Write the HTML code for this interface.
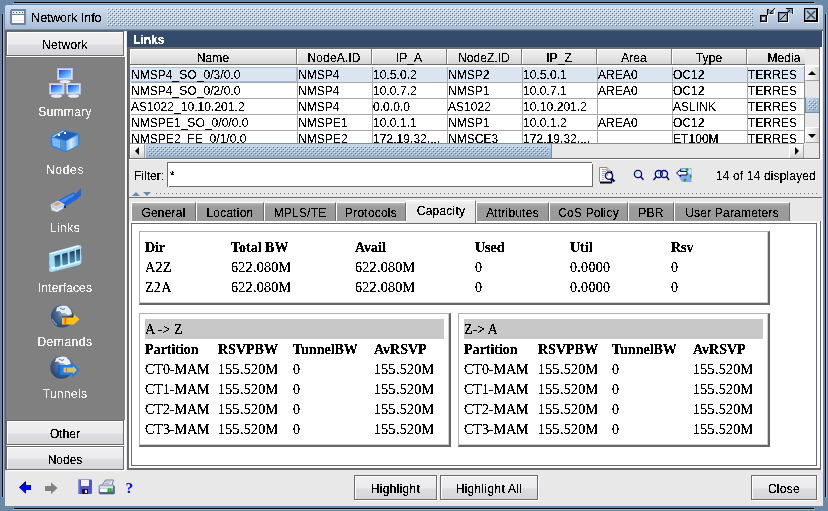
<!DOCTYPE html>
<html><head><meta charset="utf-8"><style>
*{margin:0;padding:0;box-sizing:border-box}
html,body{width:828px;height:511px;overflow:hidden;background:#6a88a8}
body{position:relative;font-family:"Liberation Sans",sans-serif;font-size:12px;color:#000}
.a{position:absolute}
.t{position:absolute;white-space:nowrap;line-height:1}
.btn{position:absolute;border:1px solid #6a6a6a;background:linear-gradient(#efeff1,#ebebed 50%,#dddde1 58%,#d6d6da);box-shadow:inset 1px 1px 0 #fff,1px 1px 0 #fff}
.hdr{position:absolute;top:0;height:16px;border-right:1px solid #7c7c7c;border-bottom:1px solid #6c6c6c;background:linear-gradient(#f0f0f0,#e6e6e6 50%,#d4d4d4);box-shadow:inset 1px 1px 0 #fff;text-align:center;line-height:19px;letter-spacing:0.1px}
.cell{position:absolute;height:16px;border-right:1px solid #a8a8a8;border-bottom:1px solid #a8a8a8;padding-left:0px;padding-top:2px;line-height:12px;overflow:hidden;white-space:nowrap;letter-spacing:0.05px}
.tab{position:absolute;top:202px;height:19px;background:linear-gradient(#b4b4b4,#9c9c9c 4px,#999);border-left:1px solid #fff;border-top:1px solid #fff;border-right:1px solid #6a6a6a;text-align:center;line-height:20px;font-size:12px;letter-spacing:0.2px}
.sel{background:linear-gradient(#f4f4f4,#e8e8e8 4px);line-height:20px;height:21px;border-right-color:#7a7a7a}
.ser{font-family:"Liberation Serif",serif;font-size:14px}
.bx{position:absolute;border-top:1px solid #b0b0b0;border-left:1px solid #b0b0b0;border-right:2px solid #666;border-bottom:2px solid #666;background:#fff;box-shadow:inset -1px -1px 0 #d0d0d0}
.lbl{position:absolute;color:#f0f0f0;font-size:12px;white-space:nowrap;line-height:1;width:120px;text-align:center;left:5px}
.t,.cell,.tx,.lbl{filter:url(#cs)}.tx{display:inline-block}.ser{filter:url(#cf)}</style></head><body>
<svg width="0" height="0" style="position:absolute"><filter id="cs" x="0" y="0" width="100%" height="100%"><feComponentTransfer><feFuncA type="discrete" tableValues="0 0 1 1 1"/></feComponentTransfer></filter><filter id="cf" x="0" y="0" width="100%" height="100%"><feComponentTransfer><feFuncA type="discrete" tableValues="0 0 0 0 0 0 0 1 1 1 1 1 1 1 1 1 1 1 1 1"/></feComponentTransfer></filter></svg><div class="a" style="left:14px;top:2px;width:800px;height:1px;background:#000"></div>
<div class="a" style="left:2px;top:14px;width:1px;height:483px;background:#000"></div>
<div class="a" style="left:825px;top:14px;width:1px;height:483px;background:#000"></div>
<div class="a" style="left:14px;top:508px;width:800px;height:1px;background:#000"></div>
<div class="a" style="left:13px;top:3px;width:802px;height:1px;background:#9cb6d4"></div>
<div class="a" style="left:3px;top:13px;width:1px;height:485px;background:#9cb6d4"></div>
<div class="a" style="left:826px;top:13px;width:1px;height:485px;background:#9cb6d4"></div>
<div class="a" style="left:13px;top:509px;width:802px;height:1px;background:#9cb6d4"></div>
<div class="a" style="left:5px;top:5px;width:818px;height:24px;background:linear-gradient(#d0dded,#b9cbe0 60%,#a9bdd5);border-radius:2px 2px 0 0"></div>
<div class="a" style="left:5px;top:29px;width:818px;height:1px;background:#7890aa"></div>
<div class="a" style="left:5px;top:30px;width:818px;height:1px;background:#5e6670"></div>
<svg class="a" style="left:107px;top:8px" width="646" height="18"><defs><pattern id="bp" width="4" height="4" patternUnits="userSpaceOnUse"><rect x="0" y="0" width="1" height="1" fill="#fff"/><rect x="2" y="2" width="1" height="1" fill="#fff"/><rect x="1" y="1" width="1" height="1" fill="#5d7594"/><rect x="3" y="3" width="1" height="1" fill="#5d7594"/></pattern></defs><rect width="646" height="18" fill="url(#bp)"/></svg>
<svg class="a" style="left:10px;top:9px" width="17" height="17" shape-rendering="crispEdges"><path d="M1 0 H15 L16 1 V15 L15 16 H1 L0 15 V1 Z" fill="#6d85a3"/><rect x="2" y="2" width="12" height="3" fill="#e4ecf4"/><rect x="3" y="3" width="1" height="1" fill="#44546a"/><rect x="6" y="3" width="1" height="1" fill="#44546a"/><rect x="9" y="3" width="1" height="1" fill="#44546a"/><rect x="12" y="3" width="1" height="1" fill="#44546a"/><rect x="2" y="6" width="12" height="8" fill="#fff"/><rect x="2" y="11" width="12" height="1" fill="#f4e8f0"/></svg>
<div class="t" style="left:31px;top:11px;font-size:13px;letter-spacing:-0.2px">Network Info</div>
<svg class="a" style="left:756px;top:6px" width="66" height="18" shape-rendering="crispEdges"><g transform="translate(-756,-6)">
<rect x="760" y="15" width="7" height="7" fill="#000"/><rect x="761" y="16" width="5" height="5" fill="#44566c"/><rect x="762" y="17" width="3" height="3" fill="#cfdcea"/>
<rect x="767" y="16" width="1" height="7" fill="#fff"/><rect x="761" y="22" width="7" height="1" fill="#fff"/>
<rect x="767" y="9" width="1" height="6" fill="#000"/><rect x="767" y="9" width="2" height="1" fill="#000"/>
<rect x="768" y="10" width="6" height="4" fill="#7f96b0"/>
<rect x="774" y="8" width="1" height="1" fill="#000"/><rect x="773" y="9" width="1" height="1" fill="#000"/><rect x="772" y="10" width="1" height="1" fill="#000"/><rect x="771" y="11" width="1" height="1" fill="#000"/><rect x="770" y="12" width="1" height="1" fill="#000"/>
<rect x="770" y="13" width="3" height="1" fill="#000"/><rect x="768" y="14" width="7" height="1" fill="#fff"/><rect x="774" y="10" width="1" height="4" fill="#fff"/>
<rect x="778" y="12" width="10" height="10" fill="#000"/><rect x="779" y="13" width="8" height="8" fill="#6a819c"/><rect x="780" y="14" width="6" height="6" fill="#a9bdd3"/>
<rect x="780" y="19" width="1" height="1" fill="#000"/><rect x="781" y="18" width="1" height="1" fill="#000"/><rect x="782" y="17" width="1" height="1" fill="#000"/><rect x="783" y="16" width="1" height="1" fill="#000"/><rect x="784" y="15" width="1" height="1" fill="#000"/><rect x="785" y="14" width="1" height="1" fill="#000"/>
<rect x="788" y="13" width="1" height="10" fill="#fff"/><rect x="779" y="22" width="10" height="1" fill="#fff"/>
<rect x="786" y="8" width="7" height="1" fill="#000"/><rect x="792" y="8" width="1" height="6" fill="#1a1a1a"/><rect x="787" y="9" width="5" height="4" fill="#7f96b0"/>
<rect x="789" y="10" width="1" height="1" fill="#000"/><rect x="788" y="11" width="1" height="1" fill="#000"/><rect x="787" y="12" width="1" height="1" fill="#000"/>
<rect x="793" y="9" width="1" height="5" fill="#fff"/>
<rect x="804" y="8" width="14" height="14" fill="#000"/><rect x="805" y="9" width="11" height="11" fill="#8ea4bd"/><rect x="806" y="10" width="10" height="10" fill="#b4c6da"/>
<rect x="816" y="10" width="1" height="11" fill="#000"/><rect x="806" y="20" width="11" height="1" fill="#000"/>
<rect x="818" y="9" width="1" height="14" fill="#fff"/><rect x="805" y="22" width="14" height="1" fill="#fff"/>
<path d="M807 11 L815 19 M815 11 L807 19" stroke="#3c4a5a" stroke-width="1.6" shape-rendering="auto"/>
</g></svg>
<div class="a" style="left:5px;top:31px;width:818px;height:475px;background:#e8e8e8"></div>
<div class="a" style="left:5px;top:31px;width:1px;height:439px;background:#606060"></div>
<div class="a" style="left:6px;top:56px;width:119px;height:364px;background:#808080"></div>
<div class="a" style="left:6px;top:56px;width:119px;height:1px;background:#f4f4f4"></div>
<div class="a" style="left:6px;top:57px;width:119px;height:1px;background:#747474"></div>
<div class="a" style="left:6px;top:31px;width:118px;height:25px;background:#e8e8e8"></div>
<div class="btn" style="left:6px;top:31px;width:118px;height:25px"></div>
<div class="t" style="left:5px;top:39px;width:120px;text-align:center;letter-spacing:0.25px">Network</div>
<div class="btn" style="left:6px;top:420px;width:118px;height:25px"></div>
<div class="t" style="left:5px;top:428px;width:120px;text-align:center">Other</div>
<div class="btn" style="left:6px;top:446px;width:118px;height:24px"></div>
<div class="t" style="left:5px;top:454px;width:120px;text-align:center">Nodes</div>
<div class="a" style="left:125px;top:31px;width:1px;height:439px;background:#fff"></div>
<div class="a" style="left:126px;top:31px;width:1px;height:439px;background:#ececec"></div>
<div class="a" style="left:127px;top:47px;width:1px;height:423px;background:#606060"></div>
<div class="lbl" style="top:106px;letter-spacing:0.33px">Summary</div>
<div class="lbl" style="top:164px;letter-spacing:0.7px">Nodes</div>
<div class="lbl" style="top:222px;letter-spacing:0.5px">Links</div>
<div class="lbl" style="top:282px;letter-spacing:0.15px">Interfaces</div>
<div class="lbl" style="top:336px;letter-spacing:0.55px">Demands</div>
<div class="lbl" style="top:388px;letter-spacing:0.33px">Tunnels</div>
<svg class="a" style="left:46px;top:64px" width="38" height="36">
<defs>
<linearGradient id="scr" x1="0" y1="0" x2="1" y2="1"><stop offset="0" stop-color="#1a3ee8"/><stop offset=".55" stop-color="#58a8f8"/><stop offset="1" stop-color="#a8e8ff"/></linearGradient>
</defs>
<g>
<rect x="11.5" y="4.5" width="15" height="11" fill="#d8dcf4" stroke="#b8c0e8"/>
<rect x="13" y="6" width="12" height="8" fill="url(#scr)"/>
<ellipse cx="19" cy="17.5" rx="5.5" ry="1.6" fill="#e8ecf8"/>
<rect x="3.5" y="19.5" width="14.5" height="10.5" fill="#d8dcf4" stroke="#b8c0e8"/>
<rect x="5" y="21" width="11.5" height="7.5" fill="url(#scr)"/>
<ellipse cx="10.5" cy="32" rx="5.5" ry="1.8" fill="#e8ecf8"/>
<rect x="20.5" y="19.5" width="14" height="10.5" fill="#d8dcf4" stroke="#b8c0e8"/>
<rect x="22" y="21" width="11" height="7.5" fill="url(#scr)"/>
<ellipse cx="27.5" cy="32" rx="5.5" ry="1.8" fill="#e8ecf8"/>
</g>
</svg>
<svg class="a" style="left:46px;top:124px" width="38" height="34">
<defs><linearGradient id="nf" x1="0" y1="0" x2="1" y2="0"><stop offset="0" stop-color="#70b0f0"/><stop offset=".4" stop-color="#d8ecff"/><stop offset="1" stop-color="#5aa0e8"/></linearGradient></defs>
<path d="M5 12 L17 5.5 L32 9 L33.5 11 L33.5 21 L20 28.5 L6 23 L4.5 20 Z" fill="#2f80e2"/>
<path d="M6 12.5 L17 6.5 L31 10 L20 16.5 Z" fill="#1f5eb4"/>
<path d="M6 12.5 L17 6.5 L18.5 7 L8 13 Z" fill="#a8d4fa"/>
<rect x="12" y="10" width="2" height="2" fill="#fff"/><rect x="18" y="8" width="2" height="2" fill="#fff"/>
<path d="M20 17 L32 11 L32.5 21 L20.5 27 Z" fill="url(#nf)"/>
<path d="M6 13.5 L19 17.5 L19.5 26.5 L6.5 21.5 Z" fill="#78b8f4"/>
<path d="M14 16 L19 17.5 L19.5 26.5 L14 24.5 Z" fill="#4a80b8" opacity=".7"/>
</svg>
<svg class="a" style="left:46px;top:184px" width="38" height="32">
<path d="M11.5 17 L27 8.5 L30 9.5 L35 4 L35 11.5 L30 16 L20 22 L17 25 Z" fill="#1f66da"/>
<path d="M13 17.5 L27 10 L29 11 L18 18 Z" fill="#4a90f0"/>
<path d="M4.5 20.5 L12 16.5 L18.5 20 L17.5 24.5 L11 28 L5.5 26.5 Z" fill="#c8d2e4"/>
<path d="M7 20.5 L12 18 L15 19.5 L10 22 Z" fill="#d8a070"/>
<path d="M6 24 L11 27 L16 24" fill="none" stroke="#eef2fa" stroke-width="1.2"/>
<rect x="18" y="22" width="2" height="2" fill="#203050"/>
</svg>
<svg class="a" style="left:44px;top:240px" width="42" height="36">
<defs><linearGradient id="sl" x1="0" y1="0" x2="0" y2="1"><stop offset="0" stop-color="#1c3a50"/><stop offset="1" stop-color="#5a9ac0"/></linearGradient></defs>
<path d="M5 13 L34 5 Q37.5 4.5 37.5 7.5 L37 9 L37 14 L37.5 15.5 L37.5 22 Q37.5 24 35 25 L8 32 Q5 32.5 5 30 L5.5 27 L5 22 L5.5 20 Z" fill="#9fdcf6"/>
<path d="M5.5 13.5 L34 5.5 L35.5 6.5 L7 14.5 Z" fill="#eefaff"/>
<path d="M7 27 L36 19.5 L36 22.5 L8 30 Z" fill="#d8f4ff"/>
<path d="M10.5 16 L16 14.5 L16.5 26 L11 27.5 Z" fill="url(#sl)"/>
<path d="M18 14 L23.5 12.5 L24 24 L18.5 25.5 Z" fill="url(#sl)"/>
<path d="M25.5 12 L30.5 10.5 L31 22 L26 23.5 Z" fill="url(#sl)"/>
<path d="M32 10 L36 9 L36 20.5 L32.5 21.5 Z" fill="url(#sl)"/>
</svg>
<svg class="a" style="left:46px;top:300px" width="38" height="34">
<defs><radialGradient id="gl" cx=".6" cy=".35" r=".8"><stop offset="0" stop-color="#a8bcd4"/><stop offset=".4" stop-color="#4e6e96"/><stop offset=".85" stop-color="#24446c"/><stop offset="1" stop-color="#1a3050"/></radialGradient></defs>
<circle cx="16.3" cy="16.2" r="11.3" fill="url(#gl)"/>
<path d="M11 7.5 Q16 4.5 21 6 L24.5 9.5 L26 14 L22 15.5 L19 13 L16 13.5 L13.5 11 L10 11.5 Z" fill="#e4ecf4"/>
<path d="M14 8 L17 9.5 L19 8.5" stroke="#5a7090" stroke-width="1" fill="none"/>
<path d="M6 19 Q8 23 11 25" stroke="#7a98bc" stroke-width="1.5" fill="none"/>
<path d="M16 17 L27 17 L27 13.5 L33.5 19.2 L27 25 L27 24.5 L16 24.5 Z" fill="#ffc21c"/>
<path d="M16 17 L27 17 L27 13.5" stroke="#1a2030" stroke-width="1" fill="none"/>
<rect x="18.5" y="17.5" width="1.8" height="7" fill="#ff6400"/>
</svg>
<svg class="a" style="left:46px;top:352px" width="38" height="34">
<circle cx="15.6" cy="15.5" r="11.3" fill="url(#gl)"/>
<path d="M10 6.5 Q15 3.5 20 5 L23.5 8.5 L25 12 L20 13 L17 11 L14 11.5 L12.5 9.5 L9 10 Z" fill="#eef2f8"/>
<path d="M13 7 L16 8.5 L18 7.5" stroke="#5a7090" stroke-width="1" fill="none"/>
<path d="M13 13 L26 13 L26 10 L33.5 18 L26 25.5 L26 23 L13 23 Z" fill="#1a7eee"/>
<path d="M17.5 15.5 L27 15.5 L27 14 L31 18 L27 22 L27 20.5 L17.5 20.5 Z" fill="#d4c466"/>
<rect x="20" y="15.5" width="1" height="5" fill="#e07030"/>
<path d="M13 23 L13 13" stroke="#0a4ab0" stroke-width="1"/>
</svg>

<div class="a" style="left:127px;top:31px;width:695px;height:16px;background:#354b6b"></div>
<div class="t" style="left:133px;top:34px;color:#fff;font-weight:bold;font-size:12px">Links</div>
<div class="a" style="left:128px;top:47px;width:692px;height:112px;background:#6c6c6c"></div>
<div class="a" style="left:820px;top:47px;width:2px;height:113px;background:#fff"></div>
<div class="a" style="left:128px;top:159px;width:694px;height:1px;background:#fff"></div>
<div class="a" style="left:130px;top:49px;width:689px;height:109px;background:#fff"></div>
<div class="a" style="left:130px;top:49px;width:675px;height:16px;overflow:hidden">
<div class="hdr" style="left:0px;width:167px"><span class="tx">Name</span></div>
<div class="hdr" style="left:167px;width:75px"><span class="tx">NodeA.ID</span></div>
<div class="hdr" style="left:242px;width:75px"><span class="tx">IP_A</span></div>
<div class="hdr" style="left:317px;width:75px"><span class="tx">NodeZ.ID</span></div>
<div class="hdr" style="left:392px;width:75px"><span class="tx">IP_Z</span></div>
<div class="hdr" style="left:467px;width:75px"><span class="tx">Area</span></div>
<div class="hdr" style="left:542px;width:75px"><span class="tx">Type</span></div>
<div class="hdr" style="left:617px;width:75px"><span class="tx">Media</span></div>
</div>
<div class="a" style="left:805px;top:49px;width:14px;height:16px;background:#e8e8e8"></div>
<div class="a" style="left:130px;top:65px;width:675px;height:1px;background:#fff"></div>
<div class="a" style="left:130px;top:67px;width:674px;height:15px;background:#dae5f1"></div>
<div class="a" style="left:131px;top:67px;width:673px;height:77px;overflow:hidden">
<div class="a" style="left:-1px;top:0;width:167px;height:15px;border:1px solid #a9c0da"></div>
<div class="cell" style="left:0px;top:0px;width:167px">NMSP4_SO_0/3/0.0</div>
<div class="cell" style="left:167px;top:0px;width:75px">NMSP4</div>
<div class="cell" style="left:242px;top:0px;width:75px">10.5.0.2</div>
<div class="cell" style="left:317px;top:0px;width:75px">NMSP2</div>
<div class="cell" style="left:392px;top:0px;width:75px">10.5.0.1</div>
<div class="cell" style="left:467px;top:0px;width:75px">AREA0</div>
<div class="cell" style="left:542px;top:0px;width:75px">OC12</div>
<div class="cell" style="left:617px;top:0px;width:75px">TERRES</div>
<div class="cell" style="left:0px;top:16px;width:167px">NMSP4_SO_0/2/0.0</div>
<div class="cell" style="left:167px;top:16px;width:75px">NMSP4</div>
<div class="cell" style="left:242px;top:16px;width:75px">10.0.7.2</div>
<div class="cell" style="left:317px;top:16px;width:75px">NMSP1</div>
<div class="cell" style="left:392px;top:16px;width:75px">10.0.7.1</div>
<div class="cell" style="left:467px;top:16px;width:75px">AREA0</div>
<div class="cell" style="left:542px;top:16px;width:75px">OC12</div>
<div class="cell" style="left:617px;top:16px;width:75px">TERRES</div>
<div class="cell" style="left:0px;top:32px;width:167px">AS1022_10.10.201.2</div>
<div class="cell" style="left:167px;top:32px;width:75px">NMSP4</div>
<div class="cell" style="left:242px;top:32px;width:75px">0.0.0.0</div>
<div class="cell" style="left:317px;top:32px;width:75px">AS1022</div>
<div class="cell" style="left:392px;top:32px;width:75px">10.10.201.2</div>
<div class="cell" style="left:467px;top:32px;width:75px"></div>
<div class="cell" style="left:542px;top:32px;width:75px">ASLINK</div>
<div class="cell" style="left:617px;top:32px;width:75px">TERRES</div>
<div class="cell" style="left:0px;top:48px;width:167px">NMSPE1_SO_0/0/0.0</div>
<div class="cell" style="left:167px;top:48px;width:75px">NMSPE1</div>
<div class="cell" style="left:242px;top:48px;width:75px">10.0.1.1</div>
<div class="cell" style="left:317px;top:48px;width:75px">NMSP1</div>
<div class="cell" style="left:392px;top:48px;width:75px">10.0.1.2</div>
<div class="cell" style="left:467px;top:48px;width:75px">AREA0</div>
<div class="cell" style="left:542px;top:48px;width:75px">OC12</div>
<div class="cell" style="left:617px;top:48px;width:75px">TERRES</div>
<div class="cell" style="left:0px;top:64px;width:167px">NMSPE2_FE_0/1/0.0</div>
<div class="cell" style="left:167px;top:64px;width:75px">NMSPE2</div>
<div class="cell" style="left:242px;top:64px;width:75px">172.19.32....</div>
<div class="cell" style="left:317px;top:64px;width:75px">NMSCE3</div>
<div class="cell" style="left:392px;top:64px;width:75px">172.19.32....</div>
<div class="cell" style="left:467px;top:64px;width:75px"></div>
<div class="cell" style="left:542px;top:64px;width:75px">ET100M</div>
<div class="cell" style="left:617px;top:64px;width:75px">TERRES</div>
</div>
<div class="a" style="left:804px;top:66px;width:15px;height:77px;background:#e8e8e8;border-left:1px solid #8a8a8a"></div>
<div class="a" style="left:805px;top:66px;width:14px;height:15px;background:linear-gradient(to right,#f8f8f8,#ececec 50%,#d2d2d2);border-top:1px solid #fff;border-left:1px solid #fff;border-bottom:1px solid #a0a0a0"></div>
<svg class="a" style="left:807px;top:70px" width="10" height="6"><path d="M1 5 L5 1 L9 5 Z" fill="#000"/></svg>
<div class="a" style="left:805px;top:97px;width:14px;height:16px;background:linear-gradient(135deg,#c8d8ea,#a8bed8 50%,#98b0cc);border-top:1px solid #d8e4f0;border-left:1px solid #7890b0;border-bottom:1px solid #7890b0"></div>
<div class="a" style="left:805px;top:127px;width:14px;height:16px;background:linear-gradient(to right,#f8f8f8,#ececec 50%,#d2d2d2);border-top:1px solid #fff;border-left:1px solid #fff;border-bottom:1px solid #a0a0a0"></div>
<svg class="a" style="left:807px;top:133px" width="10" height="6"><path d="M1 1 L9 1 L5 5 Z" fill="#000"/></svg>
<div class="a" style="left:130px;top:143px;width:674px;height:15px;background:#e8e8e8;border-top:1px solid #8a8a8a"></div>
<div class="a" style="left:130px;top:144px;width:15px;height:14px;background:linear-gradient(#f8f8f8,#ececec 50%,#d2d2d2);border-top:1px solid #fff;border-left:1px solid #fff;border-right:1px solid #a0a0a0"></div>
<svg class="a" style="left:134px;top:146px" width="6" height="10"><path d="M5 1 L1 5 L5 9 Z" fill="#000"/></svg>
<div class="a" style="left:145px;top:143px;width:407px;height:15px;background:linear-gradient(#c8d8ea,#a8bed8 50%,#98b0cc);border-top:1px solid #7890b0;border-right:1px solid #7890b0;border-left:1px solid #d8e4f0"></div>
<div class="a" style="left:789px;top:144px;width:15px;height:14px;background:linear-gradient(#f8f8f8,#ececec 50%,#d2d2d2);border-top:1px solid #fff;border-left:1px solid #fff;border-right:1px solid #a0a0a0"></div>
<svg class="a" style="left:794px;top:146px" width="6" height="10"><path d="M1 1 L5 5 L1 9 Z" fill="#000"/></svg>
<div class="a" style="left:804px;top:143px;width:15px;height:15px;background:#e8e8e8"></div>
<svg class="a" style="left:148px;top:146px" width="401" height="10"><defs><pattern id="tb" width="4" height="4" patternUnits="userSpaceOnUse"><rect x="0" y="0" width="1" height="1" fill="#e4eef8"/><rect x="2" y="2" width="1" height="1" fill="#e4eef8"/><rect x="1" y="1" width="1" height="1" fill="#5f7898"/><rect x="3" y="3" width="1" height="1" fill="#5f7898"/></pattern></defs><rect width="401" height="10" fill="url(#tb)"/></svg>
<svg class="a" style="left:808px;top:100px" width="9" height="10"><rect width="9" height="10" fill="url(#tb)"/></svg>
<div class="t" style="left:134px;top:170px;">Filter:</div>
<div class="a" style="left:128px;top:159px;width:1px;height:38px;background:#707070"></div>
<div class="a" style="left:167px;top:162px;width:426px;height:25px;background:#fff"></div>
<div class="a" style="left:167px;top:162px;width:1px;height:25px;background:#6a6a6a"></div>
<div class="a" style="left:167px;top:162px;width:425px;height:1px;background:#6a6a6a"></div>
<div class="a" style="left:592px;top:164px;width:1px;height:23px;background:#6a6a6a"></div>
<div class="a" style="left:169px;top:186px;width:424px;height:1px;background:#6a6a6a"></div>
<div class="t" style="left:170px;top:170px;">*</div>
<div class="t" style="left:716px;top:170px;letter-spacing:0.14px">14 of 14 displayed</div>
<svg class="a" style="left:596px;top:164px" width="100" height="22">
<path d="M3.5 3.5 L11 3.5 L14.5 7 L14.5 17.5 L3.5 17.5 Z" fill="#fafafa" stroke="#8a8a8a"/>
<path d="M11 3.5 L11 7 L14.5 7" fill="#e0e0e0" stroke="#8a8a8a"/>
<rect x="4" y="18" width="12" height="1.5" fill="#000"/><rect x="15" y="7" width="1.2" height="12" fill="#000"/>
<g fill="#b8a898"><rect x="6" y="5" width="4" height="1"/><rect x="6" y="7" width="4" height="1"/><rect x="6" y="9" width="3" height="1"/><rect x="6" y="11" width="2" height="1"/><rect x="6" y="13" width="2" height="1"/><rect x="6" y="15" width="2" height="1"/></g>
<circle cx="13" cy="11.8" r="3.6" fill="#fff" stroke="#000080" stroke-width="1.4"/>
<path d="M15.5 14.5 L18.5 17.5" stroke="#000080" stroke-width="2.2"/>
<rect x="11" y="10" width="1" height="2" fill="#00e0f0"/>
<circle cx="42" cy="10" r="3.6" fill="#f4f8ff" stroke="#000080" stroke-width="1.3"/>
<path d="M44.5 12.5 L47.5 15.8" stroke="#000080" stroke-width="1.5"/>
<rect x="40.5" y="8.5" width="1" height="2" fill="#00e0f0"/>
<circle cx="62.8" cy="10" r="3.5" fill="#f4f8ff" stroke="#000080" stroke-width="1.3"/>
<circle cx="68" cy="10" r="3.5" fill="none" stroke="#000080" stroke-width="1.3"/>
<path d="M60.5 12.5 L57.5 16" stroke="#000080" stroke-width="1.4"/><path d="M70.5 12.5 L73 16" stroke="#000080" stroke-width="1.4"/>
<rect x="62" y="8.5" width="1" height="2" fill="#00e0f0"/>
<path d="M84 4 L95.5 4 L95.5 18 L86 18 L83 13 Z" fill="#8aa8f0"/>
<path d="M86 6 Q92 3.5 95 5 L95 10 L90 9 Z" fill="#d8e4fa"/>
<g fill="#10b010"><circle cx="91" cy="5.5" r="1.6"/><rect x="94" y="11" width="1.5" height="3"/><circle cx="89" cy="16" r="1.5"/><rect x="86" y="7.5" width="2" height="1.5"/></g>
<path d="M80.5 9 L84.5 5.8 L84.5 7.5 L91 7.5 L91 11 L84.5 11 L84.5 12.5 Z" fill="#fff" stroke="#000080" stroke-width="1"/>
</svg>

<svg class="a" style="left:128px;top:191px" width="694" height="7"><path d="M4 5 L8 1 L12 5 Z" fill="#6d87a6"/><path d="M15 1 L23 1 L19 5 Z" fill="#6d87a6"/><defs><pattern id="dd" width="4" height="2" patternUnits="userSpaceOnUse"><rect x="0" y="0" width="1" height="1" fill="#7a7a7a"/></pattern></defs><rect x="28" y="2" width="663" height="2" fill="url(#dd)"/></svg>
<div class="a" style="left:128px;top:197px;width:694px;height:1px;background:#6e6e6e"></div>
<div class="a" style="left:127px;top:197px;width:2px;height:273px;background:#6a6a6a"></div>
<div class="a" style="left:127px;top:468px;width:694px;height:2px;background:#6a6a6a"></div>
<div class="a" style="left:820px;top:221px;width:1px;height:249px;background:#6a6a6a"></div>
<div class="a" style="left:821px;top:221px;width:2px;height:250px;background:#fbfbfb"></div>
<div class="a" style="left:129px;top:221px;width:691px;height:247px;background:#fff"></div>
<div class="a" style="left:131px;top:223px;width:686px;height:243px;border:1px solid #6a6a6a"></div>
<div class="tab" style="left:131px;width:65px"><span class="tx">General</span></div>
<div class="tab" style="left:196px;width:68px"><span class="tx">Location</span></div>
<div class="tab" style="left:264px;width:72px"><span class="tx">MPLS/TE</span></div>
<div class="tab" style="left:336px;width:70px"><span class="tx">Protocols</span></div>
<div class="tab" style="left:476px;width:73px"><span class="tx">Attributes</span></div>
<div class="tab" style="left:549px;width:79px"><span class="tx">CoS Policy</span></div>
<div class="tab" style="left:628px;width:46px"><span class="tx">PBR</span></div>
<div class="tab" style="left:674px;width:116px"><span class="tx">User Parameters</span></div>
<div class="tab sel" style="left:406px;width:70px;top:200px;height:23px"><span class="tx">Capacity</span></div>
<div class="bx" style="left:139px;top:231px;width:631px;height:74px"></div>
<div class="bx" style="left:139px;top:313px;width:312px;height:134px"></div>
<div class="bx" style="left:458px;top:313px;width:312px;height:134px"></div>
<div class="t ser" style="left:145px;top:241px;font-weight:bold;">Dir</div>
<div class="t ser" style="left:231px;top:241px;font-weight:bold;">Total BW</div>
<div class="t ser" style="left:355px;top:241px;font-weight:bold;">Avail</div>
<div class="t ser" style="left:475px;top:241px;font-weight:bold;">Used</div>
<div class="t ser" style="left:570px;top:241px;font-weight:bold;">Util</div>
<div class="t ser" style="left:671px;top:241px;font-weight:bold;">Rsv</div>
<div class="t ser" style="left:145px;top:261px;letter-spacing:0.3px;">A2Z</div>
<div class="t ser" style="left:231px;top:261px;letter-spacing:0.3px;">622.080M</div>
<div class="t ser" style="left:355px;top:261px;letter-spacing:0.3px;">622.080M</div>
<div class="t ser" style="left:475px;top:261px;letter-spacing:0.3px;">0</div>
<div class="t ser" style="left:570px;top:261px;letter-spacing:0.3px;">0.0000</div>
<div class="t ser" style="left:671px;top:261px;letter-spacing:0.3px;">0</div>
<div class="t ser" style="left:145px;top:281px;letter-spacing:0.3px;">Z2A</div>
<div class="t ser" style="left:231px;top:281px;letter-spacing:0.3px;">622.080M</div>
<div class="t ser" style="left:355px;top:281px;letter-spacing:0.3px;">622.080M</div>
<div class="t ser" style="left:475px;top:281px;letter-spacing:0.3px;">0</div>
<div class="t ser" style="left:570px;top:281px;letter-spacing:0.3px;">0.0000</div>
<div class="t ser" style="left:671px;top:281px;letter-spacing:0.3px;">0</div>
<div class="a" style="left:145px;top:319px;width:299px;height:20px;background:#c8c8c8"></div>
<div class="t ser" style="left:145px;top:323px;">A -&gt; Z</div>
<div class="t ser" style="left:145px;top:343px;font-weight:bold;">Partition</div>
<div class="t ser" style="left:218px;top:343px;font-weight:bold;">RSVPBW</div>
<div class="t ser" style="left:293px;top:343px;font-weight:bold;">TunnelBW</div>
<div class="t ser" style="left:374px;top:343px;font-weight:bold;">AvRSVP</div>
<div class="t ser" style="left:145px;top:363px;">CT0-MAM</div>
<div class="t ser" style="left:218px;top:363px;letter-spacing:0.3px;">155.520M</div>
<div class="t ser" style="left:293px;top:363px;letter-spacing:0.3px;">0</div>
<div class="t ser" style="left:374px;top:363px;letter-spacing:0.3px;">155.520M</div>
<div class="t ser" style="left:145px;top:383px;">CT1-MAM</div>
<div class="t ser" style="left:218px;top:383px;letter-spacing:0.3px;">155.520M</div>
<div class="t ser" style="left:293px;top:383px;letter-spacing:0.3px;">0</div>
<div class="t ser" style="left:374px;top:383px;letter-spacing:0.3px;">155.520M</div>
<div class="t ser" style="left:145px;top:403px;">CT2-MAM</div>
<div class="t ser" style="left:218px;top:403px;letter-spacing:0.3px;">155.520M</div>
<div class="t ser" style="left:293px;top:403px;letter-spacing:0.3px;">0</div>
<div class="t ser" style="left:374px;top:403px;letter-spacing:0.3px;">155.520M</div>
<div class="t ser" style="left:145px;top:423px;">CT3-MAM</div>
<div class="t ser" style="left:218px;top:423px;letter-spacing:0.3px;">155.520M</div>
<div class="t ser" style="left:293px;top:423px;letter-spacing:0.3px;">0</div>
<div class="t ser" style="left:374px;top:423px;letter-spacing:0.3px;">155.520M</div>
<div class="a" style="left:464px;top:319px;width:299px;height:20px;background:#c8c8c8"></div>
<div class="t ser" style="left:464px;top:323px;">Z-&gt; A</div>
<div class="t ser" style="left:464px;top:343px;font-weight:bold;">Partition</div>
<div class="t ser" style="left:538px;top:343px;font-weight:bold;">RSVPBW</div>
<div class="t ser" style="left:612px;top:343px;font-weight:bold;">TunnelBW</div>
<div class="t ser" style="left:693px;top:343px;font-weight:bold;">AvRSVP</div>
<div class="t ser" style="left:464px;top:363px;">CT0-MAM</div>
<div class="t ser" style="left:538px;top:363px;letter-spacing:0.3px;">155.520M</div>
<div class="t ser" style="left:612px;top:363px;letter-spacing:0.3px;">0</div>
<div class="t ser" style="left:693px;top:363px;letter-spacing:0.3px;">155.520M</div>
<div class="t ser" style="left:464px;top:383px;">CT1-MAM</div>
<div class="t ser" style="left:538px;top:383px;letter-spacing:0.3px;">155.520M</div>
<div class="t ser" style="left:612px;top:383px;letter-spacing:0.3px;">0</div>
<div class="t ser" style="left:693px;top:383px;letter-spacing:0.3px;">155.520M</div>
<div class="t ser" style="left:464px;top:403px;">CT2-MAM</div>
<div class="t ser" style="left:538px;top:403px;letter-spacing:0.3px;">155.520M</div>
<div class="t ser" style="left:612px;top:403px;letter-spacing:0.3px;">0</div>
<div class="t ser" style="left:693px;top:403px;letter-spacing:0.3px;">155.520M</div>
<div class="t ser" style="left:464px;top:423px;">CT3-MAM</div>
<div class="t ser" style="left:538px;top:423px;letter-spacing:0.3px;">155.520M</div>
<div class="t ser" style="left:612px;top:423px;letter-spacing:0.3px;">0</div>
<div class="t ser" style="left:693px;top:423px;letter-spacing:0.3px;">155.520M</div>
<div class="btn" style="left:354px;top:475px;width:83px;height:25px"></div>
<div class="t" style="left:354px;top:483px;width:83px;text-align:center;letter-spacing:0.3px">Highlight</div>
<div class="btn" style="left:440px;top:475px;width:98px;height:25px"></div>
<div class="t" style="left:440px;top:483px;width:98px;text-align:center;letter-spacing:0.3px">Highlight All</div>
<div class="btn" style="left:751px;top:475px;width:66px;height:25px"></div>
<div class="t" style="left:751px;top:483px;width:66px;text-align:center;letter-spacing:0.3px">Close</div>
<svg class="a" style="left:14px;top:476px" width="124" height="24">
<path d="M5 11.5 L11.5 5.5 L12 5.5 L12 9 L17 9 L17 14 L12 14 L12 17.5 L11.5 17.5 Z" fill="#0000ff"/>
<path d="M5 11.5 L11.5 5.5 L12 5.5 L12 7 L6.5 11.5 Z" fill="#000070"/>
<path d="M31 10 L37 10 L37 6.5 L43.5 12 L37 18 L37 15 L31 15 Z" fill="#808080"/>
<rect x="64" y="3.5" width="14" height="14.5" rx="1" fill="#5656c4"/>
<rect x="64" y="3.5" width="1.5" height="14.5" fill="#8a8ae0"/>
<rect x="67" y="4" width="8" height="6" fill="#f0f2fa"/>
<rect x="68" y="13" width="6" height="5" fill="#181830"/>
<rect x="71" y="14" width="2" height="3" fill="#e8e8f0"/>
<defs><linearGradient id="pb" x1="0" y1="0" x2="0" y2="1"><stop offset="0" stop-color="#c4ccdc"/><stop offset=".5" stop-color="#98a6bc"/><stop offset="1" stop-color="#3a4a68"/></linearGradient></defs>
<path d="M88 9.5 L91.5 4 L99.5 4 L98 9.5 Z" fill="#e8ecf4" stroke="#6a7490" stroke-width=".9"/>
<rect x="91" y="5.5" width="6" height=".8" fill="#9aa0b8"/><rect x="90.5" y="7.3" width="5" height=".8" fill="#9aa0b8"/>
<path d="M86 9 L98 9 Q100.5 9 100.5 11 L100.5 17 Q100.5 18 99 18 L86.5 18 Q85 18 85 16.5 L85 10.5 Q85 9 86 9 Z" fill="url(#pb)" stroke="#5a6884" stroke-width=".6"/>
<rect x="86" y="10.5" width="13.5" height="1.2" fill="#f4f6fa"/>
<rect x="86" y="12.5" width="7.5" height="3.5" fill="#f4f6fc"/>
<rect x="93.8" y="12.5" width="3.4" height="3.4" fill="#00c000"/><rect x="95" y="13.6" width="1" height="1" fill="#a0ff60"/>
<rect x="99" y="10" width="1.5" height="8" fill="#5a6a88"/>
<text x="111.5" y="17" font-family="Liberation Serif" font-weight="bold" font-size="15" fill="#0000e0">?</text>
</svg>

</body></html>
